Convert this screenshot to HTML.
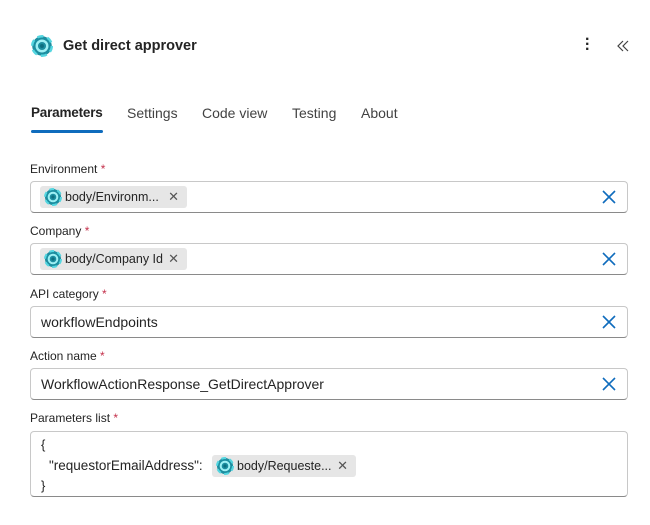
<!DOCTYPE html>
<html><head><style>
body{margin:0;width:650px;height:525px;background:#fff;font-family:"Liberation Sans",sans-serif;color:#242424;position:relative;overflow:hidden}
.a{position:absolute}
.lbl{position:absolute;left:30px;font-size:12px;color:#242424}
.lbl span{color:#c4314b}
.inp{position:absolute;left:30px;width:596px;height:30px;border:1px solid #c8c8c8;border-bottom-color:#8a8a8a;border-radius:4px;box-sizing:content-box}
.tok{position:absolute;top:4px;height:22px;background:#e6e6e6;border-radius:3px;font-size:12.5px;line-height:22px;padding-left:25px;box-sizing:border-box}
.tok svg{position:absolute;left:4px;top:2px}
.tok i{position:absolute;right:8px;top:0;font-style:normal;color:#555;font-size:13px}
.x{position:absolute;right:10px;top:7px}
.txt{position:absolute;left:10px;top:7px;font-size:14px}
.tab{position:absolute;top:105px;font-size:14px;color:#424242}
</style></head><body>
<svg width="0" height="0" style="position:absolute"><defs>
<g id="ic"><circle cx="9" cy="9" r="8" fill="#1c8ea0"/><circle cx="9" cy="9" r="8" fill="none" stroke="#55d6e0" stroke-width="2" stroke-dasharray="5 3.4"/><circle cx="9" cy="9" r="4.3" fill="none" stroke="#9ef0f4" stroke-width="2"/><circle cx="9" cy="9" r="1.6" fill="#0d6f80"/></g>
<g id="xx"><path d="M2 2L14 14M14 2L2 14" stroke="#0f6cbd" stroke-width="1.6"/></g>
</defs></svg>
<svg class="a" style="left:31px;top:35px" width="22" height="22" viewBox="0 0 18 18"><use href="#ic"/></svg>
<div class="a" style="left:63px;top:38px;font-size:14.5px;font-weight:bold">Get direct approver</div>
<div class="a" style="left:585px;top:37px;font-size:16px;font-weight:bold;line-height:5px">·<br>·<br>·</div>
<svg class="a" style="left:616px;top:39px" width="14" height="14"><path d="M7 2L2 7L7 12M12 2L7 7L12 12" stroke="#424242" fill="none" stroke-width="1.2"/></svg>
<div class="tab" style="left:31px;font-weight:bold;color:#242424;font-size:13.5px;letter-spacing:-0.2px">Parameters</div>
<div class="a" style="left:31px;top:130px;width:72px;height:3px;background:#0f6cbd;border-radius:2px"></div>
<div class="tab" style="left:127px">Settings</div>
<div class="tab" style="left:202px">Code view</div>
<div class="tab" style="left:292px">Testing</div>
<div class="tab" style="left:361px">About</div>

<div class="lbl" style="top:162px">Environment <span>*</span></div>
<div class="inp" style="top:181px"><div class="tok" style="left:9px;width:147px"><svg width="18" height="18"><use href="#ic"/></svg>body/Environm...<i>✕</i></div><svg class="x" width="16" height="16"><use href="#xx"/></svg></div>
<div class="lbl" style="top:224px">Company <span>*</span></div>
<div class="inp" style="top:243px"><div class="tok" style="left:9px;width:147px"><svg width="18" height="18"><use href="#ic"/></svg>body/Company Id<i>✕</i></div><svg class="x" width="16" height="16"><use href="#xx"/></svg></div>
<div class="lbl" style="top:287px">API category <span>*</span></div>
<div class="inp" style="top:306px"><div class="txt">workflowEndpoints</div><svg class="x" width="16" height="16"><use href="#xx"/></svg></div>
<div class="lbl" style="top:349px">Action name <span>*</span></div>
<div class="inp" style="top:368px"><div class="txt">WorkflowActionResponse_GetDirectApprover</div><svg class="x" width="16" height="16"><use href="#xx"/></svg></div>
<div class="lbl" style="top:411px">Parameters list <span>*</span></div>
<div class="inp" style="top:431px;height:64px">
<div class="a" style="left:10px;top:5px;font-size:13px">{</div>
<div class="a" style="left:18px;top:26px;font-size:13.5px">"requestorEmailAddress":</div>
<div class="tok" style="left:181px;top:23px;width:144px"><svg width="18" height="18"><use href="#ic"/></svg>body/Requeste...<i>✕</i></div>
<div class="a" style="left:10px;top:46px;font-size:13px">}</div>
</div>
</body></html>
